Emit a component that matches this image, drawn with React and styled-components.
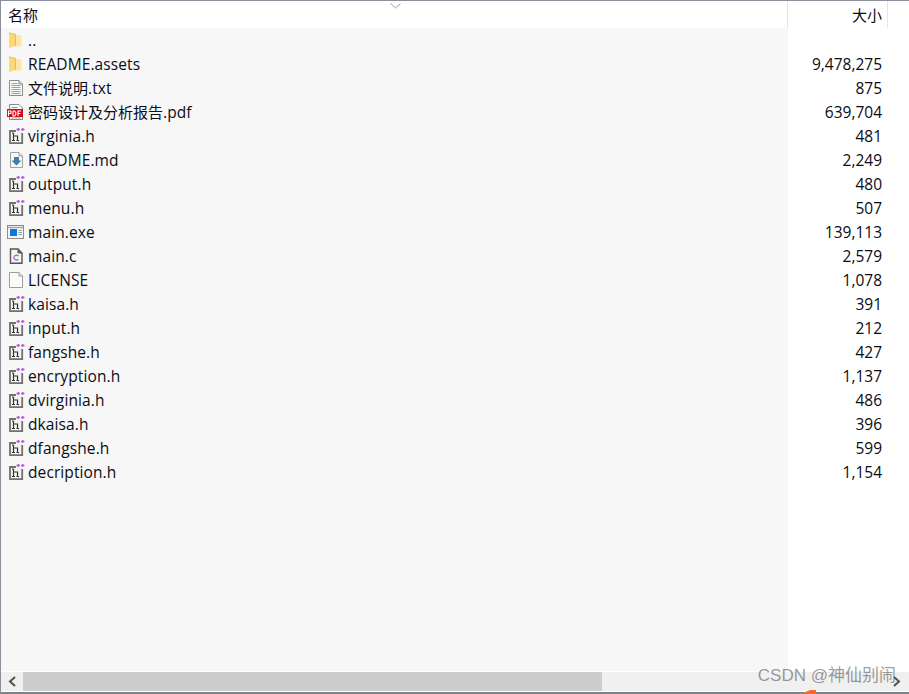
import React from 'react'
import styled, { createGlobalStyle } from 'styled-components'

const GlobalStyle = createGlobalStyle`
  html, body {
    margin: 0;
    padding: 0;
    background: #fff;
    overflow: hidden;
  }
`

const files = [
  { name: '..', size: '', icon: 'folder' },
  { name: 'README.assets', size: '9,478,275', icon: 'folder' },
  { cjk: '文件说明', name: '.txt', size: '875', icon: 'txt' },
  { cjk: '密码设计及分析报告', name: '.pdf', size: '639,704', icon: 'pdf' },
  { name: 'virginia.h', size: '481', icon: 'h' },
  { name: 'README.md', size: '2,249', icon: 'md' },
  { name: 'output.h', size: '480', icon: 'h' },
  { name: 'menu.h', size: '507', icon: 'h' },
  { name: 'main.exe', size: '139,113', icon: 'exe' },
  { name: 'main.c', size: '2,579', icon: 'c' },
  { name: 'LICENSE', size: '1,078', icon: 'blank' },
  { name: 'kaisa.h', size: '391', icon: 'h' },
  { name: 'input.h', size: '212', icon: 'h' },
  { name: 'fangshe.h', size: '427', icon: 'h' },
  { name: 'encryption.h', size: '1,137', icon: 'h' },
  { name: 'dvirginia.h', size: '486', icon: 'h' },
  { name: 'dkaisa.h', size: '396', icon: 'h' },
  { name: 'dfangshe.h', size: '599', icon: 'h' },
  { name: 'decription.h', size: '1,154', icon: 'h' },
]

const Window = styled.div`
  position: relative;
  box-sizing: border-box;
  width: 909px;
  height: 694px;
  display: flex;
  flex-direction: column;
  background: #fff;
  border-top: 1px solid #8a8f99;
  border-left: 1px solid #8a8f99;
  border-bottom: 2px solid #7d8087;
  font-family: "Open Sans", "Noto Sans CJK SC", sans-serif;
  font-size: 15.5px;
  color: #0c0c14;
`

const Header = styled.div`
  position: relative;
  display: flex;
  height: 27px;
  flex: none;
  font-size: 15px;
`

const HeaderCell = styled.div`
  box-sizing: border-box;
  display: flex;
  align-items: center;
  width: ${(p) => p.$width}px;
  justify-content: ${(p) => (p.$right ? 'flex-end' : 'flex-start')};
  padding: ${(p) => (p.$right ? '0 5px 0 0' : '0 0 0 7px')};
  border-right: 1px solid #e5e5e5;
`

const SortArrow = styled.svg`
  position: absolute;
  left: 389px;
  top: 2px;
`

const Body = styled.div`
  flex: 1;
  min-height: 0;
  display: flex;
`

const NameColumn = styled.div`
  width: 787px;
  flex: none;
  background: #f7f7f7;
`

const SizeColumn = styled.div`
  width: 94px;
  flex: none;
`

const Row = styled.div`
  height: 24px;
  display: flex;
  align-items: center;
  gap: 3px;
  padding-left: ${(p) => (p.$size ? '0' : '8px')};
  justify-content: ${(p) => (p.$size ? 'flex-end' : 'flex-start')};
  white-space: nowrap;
`

const Label = styled.span`
  display: block;
  height: 20px;
  line-height: 20px;
  letter-spacing: ${(p) => (p.$size ? '0' : '0.1px')};
`

const Cjk = styled.span`
  font-size: 15px;
  letter-spacing: 0;
`

const IconBox = styled.svg`
  flex: none;
  display: block;
  overflow: visible;
`

const ScrollBar = styled.div`
  flex: none;
  height: 19px;
  margin: 1px 0;
  display: flex;
  align-items: stretch;
  background: #f0f0f0;
`

const ScrollButton = styled.div`
  width: ${(p) => p.$width}px;
  flex: none;
  display: flex;
  align-items: center;
  justify-content: center;
`

const ScrollTrack = styled.div`
  flex: 1;
  display: flex;
`

const ScrollThumb = styled.div`
  width: 579px;
  background: #cdcdcd;
`

const Watermark = styled.div`
  position: absolute;
  right: 13px;
  bottom: 6px;
  font-family: "Liberation Sans", "Noto Sans CJK SC", sans-serif;
  font-size: 17px;
  color: rgba(90, 90, 90, 0.62);
  pointer-events: none;
`

const OrangeMark = styled.div`
  position: absolute;
  left: 799px;
  bottom: -2px;
  width: 16px;
  height: 4px;
  background: #f46a30;
  clip-path: polygon(0 100%, 65% 0, 100% 0, 100% 100%);
`

const icons = {
  folder: (
    <>
      <path d="M6 3H12.5V14.5H6Z" fill="#fde7a6" />
      <path d="M0 0.5L6.5 2V14L0 16Z" fill="#fbd777" />
      <path d="M0 0.5L6.5 2V3L0 1.5Z" fill="#ecc25c" />
      <path d="M6.5 2V14" stroke="#e8bd58" />
    </>
  ),
  txt: (
    <>
      <path d="M.5 .5H10L13.5 4V15.5H.5Z" fill="#f9f9f9" stroke="#8b8b8b" />
      <path d="M10 .5V4H13.5" fill="#dcdcdc" stroke="#8b8b8b" />
      <path d="M2.5 3.5H8.5M2.5 5.5H11.5M2.5 7.5H11.5M2.5 9.5H11.5M2.5 11.5H11.5M2.5 13.5H11.5" stroke="#a0a0a0" />
    </>
  ),
  pdf: (
    <>
      <path d="M.5 .5H10L13.5 4V15.5H.5Z" fill="#f9f9f9" stroke="#8b8b8b" />
      <path d="M2.5 3.5H8.5M2.5 14H11.5" stroke="#a0a0a0" />
      <rect x="-2" y="5" width="16" height="8" fill="#cf0c18" />
      <path d="M-.5 12V7H2V9.5H-.5M4 7V12H5.6L6.8 10.5V8.5L5.6 7H4M9 12V7H12M9 9.5H11.5" fill="none" stroke="#fff" strokeWidth="1.1" />
    </>
  ),
  h: (
    <>
      <path d="M7 3H1V15.2H13.2V5" fill="#f4f4f4" stroke="#707070" strokeWidth="1.8" />
      <path d="M4.5 5V12.5M4.5 8H8.5V12.5M3 12.5H6M7.5 12.5H10M3 5H4.5" fill="none" stroke="#333" strokeWidth="1.2" />
      <path d="M7.5 1.5H11M9.25 0V3M12 1.5H15.5M13.75 0V3" stroke="#ad6cc8" strokeWidth="1.5" />
    </>
  ),
  md: (
    <>
      <path d="M1.5 .5H10L13.5 4V15.5H1.5Z" fill="#f8f8f8" stroke="#a0a0a0" />
      <path d="M10 .5V4H13.5" fill="#e0e0e0" stroke="#a0a0a0" />
      <path d="M5 5H10V8.5H12.5L7.5 13.5L2.5 8.5H5Z" fill="#3f7fa6" />
    </>
  ),
  exe: (
    <>
      <rect x="-1.5" y="1.5" width="16" height="13" fill="#f6f6f6" stroke="#8c8c8c" />
      <path d="M-1 3.5H14" stroke="#a8a8a8" strokeWidth="1.5" />
      <rect x="1" y="5" width="7" height="7" fill="#0a78e0" />
      <path d="M9.5 6.5H13M9.5 8.5H13M9.5 10.5H13" stroke="#9a9a9a" />
    </>
  ),
  c: (
    <>
      <path d="M1.5 1H9L13 5V15.2H1.5Z" fill="#f5f5f5" stroke="#555" strokeWidth="1.4" />
      <path d="M9 1V5H13" fill="#666" stroke="#555" />
      <path d="M9.5 8C8 6.6 4.8 7.2 4.8 9.6C4.8 12 8 12.6 9.5 11.2" fill="none" stroke="#b068c8" strokeWidth="1.4" />
    </>
  ),
  blank: (
    <>
      <path d="M.5 .5H10L13.5 4V15.5H.5Z" fill="#fbfbfb" stroke="#9c9c9c" />
      <path d="M10 .5V4H13.5" fill="#e8e8e8" stroke="#9c9c9c" />
    </>
  ),
}

const FileIcon = ({ type }) => (
  <IconBox width="16" height="16" viewBox="0 0 16 16">
    {icons[type]}
  </IconBox>
)

export default function App() {
  return (
    <Window>
      <GlobalStyle />
      <Header>
        <HeaderCell $width={787}>名称</HeaderCell>
        <HeaderCell $width={100} $right>
          大小
        </HeaderCell>
        <SortArrow width="11" height="6" viewBox="0 0 11 6">
          <path d="M.5 .5L5.5 5L10.5 .5" fill="none" stroke="#9a9a9a" />
        </SortArrow>
      </Header>
      <Body>
        <NameColumn>
          {files.map((file) => (
            <Row key={file.name + file.icon + file.size}>
              <FileIcon type={file.icon} />
              <Label>
                {file.cjk && <Cjk>{file.cjk}</Cjk>}
                {file.name}
              </Label>
            </Row>
          ))}
        </NameColumn>
        <SizeColumn>
          {files.map((file) => (
            <Row key={file.name + file.icon + file.size} $size>
              <Label $size>{file.size}</Label>
            </Row>
          ))}
        </SizeColumn>
      </Body>
      <ScrollBar>
        <ScrollButton $width={22}>
          <svg width="9" height="11" viewBox="0 0 9 11">
            <path d="M7 1L2 5.5L7 10" fill="none" stroke="#505050" strokeWidth="2" />
          </svg>
        </ScrollButton>
        <ScrollTrack>
          <ScrollThumb />
        </ScrollTrack>
        <ScrollButton $width={25}>
          <svg width="9" height="11" viewBox="0 0 9 11">
            <path d="M2 1L7 5.5L2 10" fill="none" stroke="#505050" strokeWidth="2" />
          </svg>
        </ScrollButton>
      </ScrollBar>
      <Watermark>CSDN @神仙别闹</Watermark>
      <OrangeMark />
    </Window>
  )
}
